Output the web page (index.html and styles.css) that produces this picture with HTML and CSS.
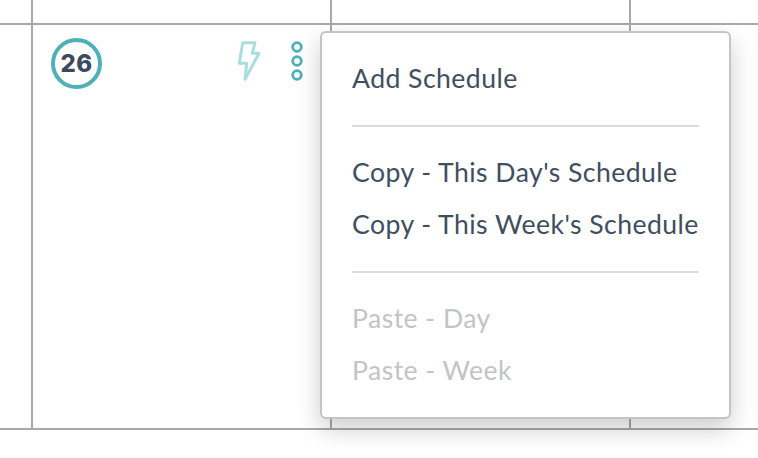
FILE: index.html
```html
<!DOCTYPE html>
<html lang="en">
<head>
<meta charset="utf-8">
<title>Schedule calendar</title>
<link rel="stylesheet" href="styles.css">
</head>
<body>
<div class="calendar">
  <div class="cell top"></div>
  <div class="cell top"></div>
  <div class="cell top"></div>
  <div class="cell top last"></div>
  <div class="cell day"></div>
  <div class="cell day today">
    <span class="date">26</span>
    <div class="tools">
      <svg class="bolt" width="24" height="42" viewBox="0 0 24 42" aria-hidden="true"><path d="M6.7 2.7H19L16.3 13.3H23L9 39.3L10.7 23.3H3.3Z" fill="none" stroke="#a9dde0" stroke-width="3" stroke-linejoin="round"/></svg>
      <svg class="dots" width="14" height="42" viewBox="0 0 14 42" aria-hidden="true"><g fill="none" stroke="#4fb0b8" stroke-width="2.8"><circle cx="7" cy="7" r="4.3"/><circle cx="7" cy="21" r="4.3"/><circle cx="7" cy="35" r="4.3"/></g></svg>
    </div>
  </div>
  <div class="cell day"></div>
  <div class="cell day last"></div>
</div>
<div class="menu">
  <div class="item">Add Schedule</div>
  <hr class="sep">
  <div class="item">Copy - This Day's Schedule</div>
  <div class="item">Copy - This Week's Schedule</div>
  <hr class="sep">
  <div class="item off">Paste - Day</div>
  <div class="item off">Paste - Week</div>
</div>
</body>
</html>
```
FILE: styles.css
```css
html, body { margin: 0; padding: 0; background: #fff; }
body { width: 758px; height: 458px; overflow: hidden; position: relative; font-family: "Lato", "Noto Sans", sans-serif; }
.calendar { display: grid; grid-template-columns: 33px 299px 299px 127px; grid-template-rows: 25px 405px; }
.cell { border-right: 2px solid #a9a9a9; border-bottom: 2px solid #a9a9a9; box-sizing: border-box; }
.last { border-right: 0; }
.today { display: flex; align-items: flex-start; justify-content: space-between; padding: 13px 26px 0 18px; }
.date { width: 51px; height: 51px; box-sizing: border-box; border: 4px solid #4fb0b8; border-radius: 50%; display: flex; align-items: center; justify-content: center; padding-bottom: 1px; font-family: "Inter", sans-serif; font-weight: 800; font-size: 24px; letter-spacing: .4px; color: #3d4a5c; }
.tools { display: flex; align-items: flex-start; gap: 30px; margin-top: 2px; }
.menu { position: absolute; left: 320px; top: 31px; width: 411px; height: 388px; box-sizing: border-box; background: #fff; border: 2px solid #c4c4c4; border-radius: 6px; box-shadow: 0 10px 24px rgba(0,0,0,.2); padding: 19px 30px 0; }
.item { font-size: 26.6px; letter-spacing: .45px; line-height: 52px; color: #414e60; white-space: nowrap; }
.off { color: #c2c4c6; }
.sep { border: 0; height: 2px; background: #dcdcdc; margin: 21px 0 19px; }
```
